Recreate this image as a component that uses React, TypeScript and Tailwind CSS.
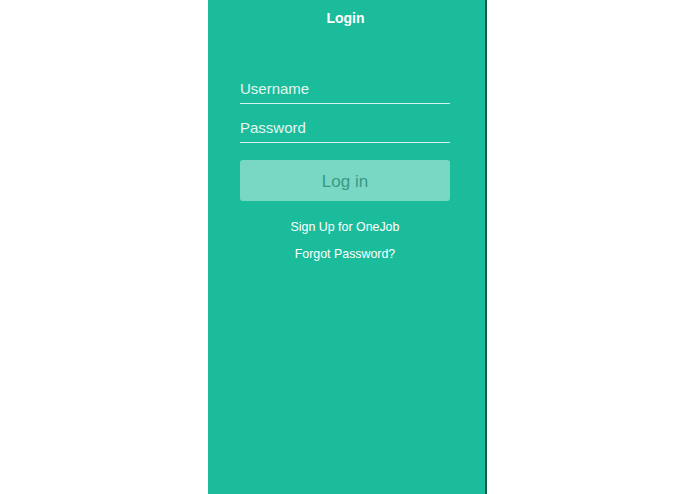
import React from "react";

export default function App() {
  return (
    <div className="w-[695px] h-[494px] bg-white" style={{ fontFamily: '"Liberation Sans", Arial, sans-serif' }}>
      <div className="ml-[208px] w-[279px] h-[494px] bg-[#1bbc9b] border-r-2 border-[#165a4c] flex flex-col">
        <div className="pt-[10px] pr-[2px] text-center text-white font-bold text-[14px] leading-[16px]">Login</div>
        <div className="ml-[32px] w-[210px] flex flex-col mt-[47px]">
          <input
            placeholder="Username"
            className="h-[31px] w-full bg-transparent border-b border-[#d4f2eb] text-[15px] text-white placeholder:text-[#e3f6f1] outline-none p-0"
          />
          <input
            type="password"
            placeholder="Password"
            className="mt-[8px] h-[31px] w-full bg-transparent border-b border-[#d4f2eb] text-[15px] text-white placeholder:text-[#e3f6f1] outline-none p-0"
          />
          <button className="mt-[17px] h-[41px] w-full rounded-[3px] bg-[#78d8c4] text-[#3a9985] text-[17px] pt-[2px]">
            Log in
          </button>
          <div className="mt-[18px] text-center text-white text-[12.4px] leading-[16px]">Sign Up for OneJob</div>
          <div className="mt-[11px] text-center text-white text-[12.4px] leading-[16px]">Forgot Password?</div>
        </div>
      </div>
    </div>
  );
}
